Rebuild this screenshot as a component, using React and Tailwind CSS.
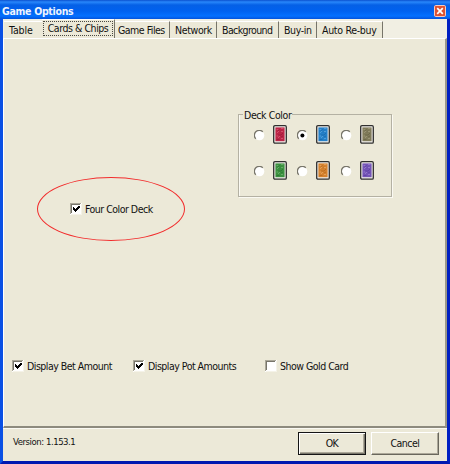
import React from 'react';

const TABS = [
  { label: 'Table', cls: 'w-[38px] pl-[5px] border-r-0 tracking-[-0.1px]' },
  { label: 'Cards & Chips', active: true },
  { label: 'Game Files', cls: 'w-[55px] pl-[3px] tracking-[-0.5px]' },
  { label: 'Network', cls: 'w-[47px] pl-[5px] tracking-[-0.35px]' },
  { label: 'Background', cls: 'w-[62px] pl-[5px] tracking-[-0.6px]' },
  { label: 'Buy-in', cls: 'w-[38px] pl-[5px] tracking-[-0.4px]' },
  { label: 'Auto Re-buy', cls: 'w-[66px] pl-[5px] tracking-[-0.3px]' },
];

const DECKS = [
  { color: '#bd2547', dark: '#8f1735', light: '#d95c74' },
  { color: '#2580c8', dark: '#1462a6', light: '#58a5df', checked: true },
  { color: '#817c5b', dark: '#625e42', light: '#a19c7c' },
  { color: '#3c9140', dark: '#256e2b', light: '#6fb36d' },
  { color: '#d5822e', dark: '#ad611a', light: '#e8a761' },
  { color: '#7455b6', dark: '#56399a', light: '#9b80d0' },
];

function Checkbox({ label, checked, className = '' }) {
  return (
    <label className={`flex h-[14px] items-center ${className}`}>
      <svg width="12" height="12" viewBox="0 0 12 12" shapeRendering="crispEdges" className="shrink-0">
        <rect width="12" height="12" fill="#fff" />
        <path d="M0 0H11V1H1V11H0Z" fill="#aaa799" />
        <path d="M1 1H10V2H2V10H1Z" fill="#77756a" />
        <path d="M11 1V11H1" fill="none" stroke="#f5f3e8" />
        {checked && <path d="M3 4H4V5H5V6H6V5H7V4H8V3H10V5H9V6H8V7H7V8H6V9H5V8H4V7H3Z" fill="#000" />}
      </svg>
      <span className="ml-[3px]">{label}</span>
    </label>
  );
}

function Radio({ checked }) {
  return (
    <svg width="11" height="11" viewBox="0 0 11 11" className="mt-[5px] shrink-0">
      <circle cx="5.5" cy="5.5" r="4.8" fill="#fff" />
      <path d="M1.8 8.8A4.8 4.8 0 0 1 8.8 1.8" fill="none" stroke="#77756a" strokeWidth="1.3" />
      {checked && <circle cx="5.4" cy="5.4" r="2" fill="#000" />}
    </svg>
  );
}

function Card({ color, dark, light }) {
  return (
    <svg width="14" height="19" viewBox="0 0 14 19" className="ml-[8px] shrink-0">
      <rect x="0.7" y="0.7" width="12.6" height="17.4" rx="1.2" fill="#f1eeea" stroke="#30302f" strokeWidth="1.3" />
      <rect x="2.4" y="2.4" width="9.2" height="13.8" fill={color} />
      <path d="M3.5 4.5h2M8 3.5h2.5M4 8l2-2M7 6.5h3M3.5 11h2M5 13l2-2M8 13.5h2" stroke={light} strokeWidth="0.8" />
      <path d="M5 6l1.5-2M8 5.5l-1 2M5 10h3l2-2M8 12l2-1M3.5 14.5h3" fill="none" stroke={dark} strokeWidth="0.6" />
    </svg>
  );
}

export default function App() {
  return (
    <div className="flex h-[464px] w-[450px] flex-col overflow-hidden bg-[#ece9d8] font-['DejaVu_Sans_Condensed','DejaVu_Sans',sans-serif] text-[10.5px] leading-[13px] tracking-[-0.5px] whitespace-nowrap text-[#111]">
      <header className="flex h-[19px] shrink-0 items-center justify-between bg-[linear-gradient(#0b51cf_0,#2887fb_2px,#0560e6_5px,#0061ef_11px,#0470ff_16px,#0353dc_19px)] pr-[4px] pl-[2px]">
        <h1 className="pt-[3px] font-['DejaVu_Sans_Condensed','DejaVu_Sans',sans-serif] text-[10.5px] font-bold tracking-[-0.3px] text-[#eef4ff]">Game Options</h1>
        <svg width="12" height="12" viewBox="0 0 12 12" className="mt-[2px]">
          <rect x="0.5" y="0.5" width="11" height="11" rx="1.3" fill="#dd5333" stroke="#f7cabe" />
          <path d="M3.2 3.2l5.6 5.6M8.8 3.2L3.2 8.8" stroke="#fff" strokeWidth="1.7" />
        </svg>
      </header>
      <div className="flex min-h-0 flex-1 flex-col border-x-[3px] border-b-[3px] border-r-[#001fc2] border-b-[#0018b0] border-l-[#0a50e4]">
        <nav className="flex h-[19px] shrink-0 items-end bg-[#f1efe3] pl-px">
          {TABS.map((t) =>
            t.active ? (
              <div key={t.label} className="flex h-[19px] w-[73px] shrink-0 border-t border-r border-t-white border-r-[#77756a] bg-[#ece9d8] pt-px">
                <span className="ml-px flex h-[15px] w-[70px] items-center justify-center border border-dotted border-[#4b4a43] tracking-[-0.45px]">{t.label}</span>
              </div>
            ) : (
              <div key={t.label} className={`flex h-[17px] shrink-0 items-center border-t border-r border-t-white border-r-[#77756a] bg-[#ece9d8] ${t.cls}`}>
                {t.label}
              </div>
            )
          )}
        </nav>
        <main className="flex h-[390px] shrink-0 flex-col border-t border-r-2 border-b-2 border-l border-t-white border-r-[#9b988a] border-b-[#8d8b7e] border-l-white">
          <div className="flex h-[320px] shrink-0">
            <div className="mt-[138px] ml-[33px] flex h-[64px] w-[148px] shrink-0 items-center rounded-[50%] border border-[#f22c2c]">
              <Checkbox label="Four Color Deck" checked className="ml-[32px]" />
            </div>
            <fieldset className="mt-[69px] ml-[53px] h-[89px] w-[154px] shrink-0 border border-[#b4b1a3] shadow-[1px_1px_0_#faf9f2,inset_1px_0_0_#faf9f2]">
              <legend className="ml-[4px] h-[13px] px-px tracking-[-0.4px]">
                <span className="block pt-px">Deck Color</span>
              </legend>
              <div className="mt-[4px] ml-[15px] grid grid-cols-[43px_44px_44px] grid-rows-[36px_20px]">
                {DECKS.map((d) => (
                  <div key={d.color} className="flex items-start">
                    <Radio checked={d.checked} />
                    <Card {...d} />
                  </div>
                ))}
              </div>
            </fieldset>
          </div>
          <div className="flex pl-[8px]">
            <Checkbox label="Display Bet Amount" checked className="w-[121px]" />
            <Checkbox label="Display Pot Amounts" checked className="w-[132px]" />
            <Checkbox label="Show Gold Card" />
          </div>
        </main>
        <footer className="flex min-h-0 flex-1 items-start border-t border-t-[#faf9f2] pt-[3px] pl-[10px]">
          <span className="mt-[3px] w-[285px] shrink-0 text-[9.5px] tracking-[-0.45px]">Version: 1.153.1</span>
          <button className="h-[23px] w-[68px] shrink-0 border border-[#151515] shadow-[inset_1px_1px_0_#fff,inset_-1px_-1px_0_#77756a,inset_-2px_-2px_0_#aca899]">OK</button>
          <button className="ml-[5px] h-[23px] w-[68px] shrink-0 border border-t-white border-r-[#69675c] border-b-[#69675c] border-l-white shadow-[inset_-1px_-1px_0_#aca899]">Cancel</button>
        </footer>
      </div>
    </div>
  );
}
